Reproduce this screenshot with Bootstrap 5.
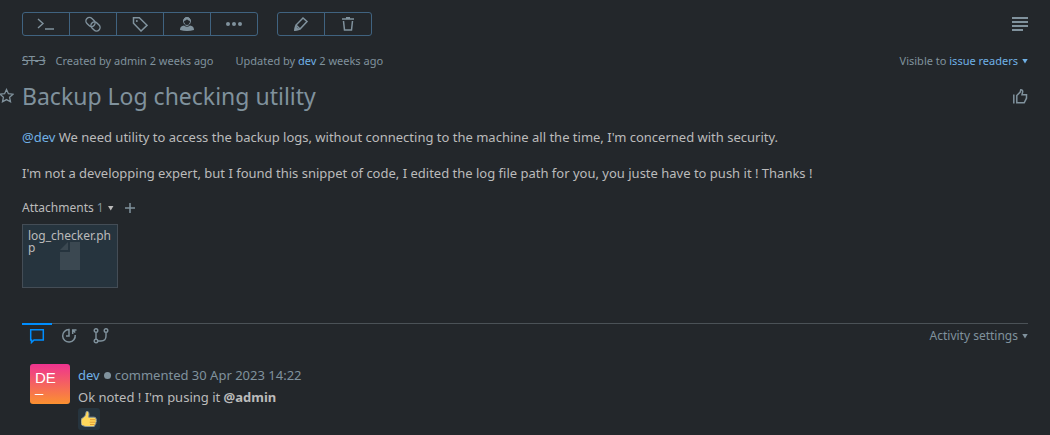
<!DOCTYPE html>
<html lang="en">
<head>
<meta charset="utf-8">
<meta name="viewport" content="width=device-width, initial-scale=1">
<title>ST-3 Backup Log checking utility</title>
<link href="https://cdn.jsdelivr.net/npm/bootstrap@5.3.0/dist/css/bootstrap.min.css" rel="stylesheet">
<style>
  :root { --page: #23272b; --text: #bbbbbb; --muted: #80929d; --link: #70b1e6; --line: #406380; --accent: #008eff; --gutter: 22px; }
  body { background: var(--page); color: var(--text); font-family: "Noto Sans", sans-serif; font-size: 13px; line-height: 20px; }
  svg { display: block; fill: none; stroke: currentColor; }
  a { color: var(--link); text-decoration: none; }
  .issue { padding: 12px var(--gutter) 0; }
  .tool-btn { width: 48px; height: 24px; padding: 0; border: 1px solid var(--line); border-radius: 3px; color: var(--muted); display: flex; align-items: center; justify-content: center; flex: none; }
  .tool-btn:hover { color: var(--link); border-color: var(--link); }
  .edit-group { margin-left: 19px; }
  .plain-btn { padding: 0; border: 0; background: none; color: var(--muted); display: flex; align-items: center; }
  .soft { color: var(--muted); }
  .meta-row { font-size: 11px; color: var(--muted); margin-top: 15px; }
  .issue-id { font-size: 12px; margin-right: 10px; }
  .created { margin-right: 22px; }
  .visible-to { color: var(--link); }
  .caret { width: 6px; height: 5px; background: currentColor; clip-path: polygon(0 0, 100% 0, 50% 100%); flex: none; }
  .title-row { margin: 10px 0 0 calc(-1 * var(--gutter)); }
  .star-btn { width: var(--gutter); }
  .issue-title { font-size: 23px; line-height: 30px; font-weight: 400; color: var(--muted); }
  .description { margin-top: 16px; }
  .description p { margin-bottom: 16px; }
  .attach-head { font-size: 12px; margin-top: 15px; }
  .add-btn { margin-left: 10px; }
  .attachment { width: 96px; height: 64px; margin-top: 6px; padding: 5px; border: 1px solid #444d56; background: #26343e; color: var(--text); font-size: 12px; line-height: 12px; overflow-wrap: anywhere; display: grid; }
  .attachment > * { grid-area: 1 / 1; }
  .activity-bar { margin-top: 35px; border-top: 1px solid #4b5257; font-size: 12px; color: var(--muted); }
  .tab-btn { width: 30px; height: 24px; border-top: 2px solid transparent; margin: -1px 2px 0 0; justify-content: center; }
  .tab-btn.active { border-top-color: var(--accent); color: var(--accent); }
  .settings-btn { margin-top: 2px; }
  .comment { margin: 17px 0 0 8px; line-height: 22px; }
  .avatar { width: 40px; height: 40px; border-radius: 3px; background: linear-gradient(#ee3390, #fb9130); color: #fff; font-family: "Liberation Sans", sans-serif; font-size: 15px; line-height: 18px; padding: 5px; }
  .avatar-dash { line-height: 12px; }
  .presence { width: 7px; height: 7px; border-radius: 50%; background: #80929d; }
  .reaction { width: 22px; height: 22px; border-radius: 3px; background: #26343e; justify-content: center; }
</style>
</head>
<body>
<main class="issue">
  <div class="d-flex align-items-center">
    <div class="btn-group" role="group" aria-label="Issue actions">
      <button class="btn tool-btn" aria-label="Apply command"><svg width="18" height="14"><path d="M1 2l5 4.500-5 4.500M8 12h9" stroke-width="1.400"/></svg></button>
      <button class="btn tool-btn" aria-label="Link issue"><svg width="16" height="16" stroke-width="1.400"><rect x="0.500" y="2.500" width="10" height="7" rx="3.500" transform="rotate(45 5.500 6)"/><rect x="5.500" y="7" width="10" height="7" rx="3.500" transform="rotate(45 10.500 10.500)"/></svg></button>
      <button class="btn tool-btn" aria-label="Tags"><svg width="16" height="16"><path d="M1.500 1.700h5.800l7.700 7.600L9 15 1.500 7.300z" stroke-width="1.500"/><circle cx="4.800" cy="5" r="1" fill="currentColor" stroke="none"/></svg></button>
      <button class="btn tool-btn" aria-label="Assignee"><svg width="16" height="16"><path d="M4.500 5C4.500 3 6 1.500 8 1.500S11.500 3 11.500 5 10 9.500 8 9.500 4.500 7 4.500 5z"/><path d="M4.500 5c0-2.500 1.500-4 3.500-4s3.500 1.500 3.500 4C9 5 9 3.500 8 3.500S7 5 4.500 5zM1 14c0-3 1.500-4 4-4.500Q8 12 11 9.500c2.500.5 4 1.500 4 4.500Q8 16 1 14z" fill="currentColor" stroke="none"/></svg></button>
      <button class="btn tool-btn" aria-label="More"><svg width="18" height="16"><g fill="currentColor" stroke="none"><circle cx="3" cy="8" r="2"/><circle cx="9" cy="8" r="2"/><circle cx="15" cy="8" r="2"/></g></svg></button>
    </div>
    <div class="btn-group edit-group" role="group" aria-label="Edit actions">
      <button class="btn tool-btn" aria-label="Edit"><svg width="16" height="16" stroke-width="1.500"><path d="M2 14l1-5 7-7 4 3.500-7 7.500zM3 9l4 4"/><path d="M2 14l.5-3 2.500 2.500z" fill="currentColor"/></svg></button>
      <button class="btn tool-btn" aria-label="Delete"><svg width="14" height="16"><path d="M1 3h12M5 1.800h4" stroke-width="1.500"/><path d="M2.500 5l1 9h7l1-9" stroke-width="1.500"/></svg></button>
    </div>
    <button class="plain-btn ms-auto" aria-label="Show sidebar"><svg width="16" height="14"><path d="M0 1h16M0 5h16M0 9h16M0 13h11" stroke-width="2"/></svg></button>
  </div>

  <div class="meta-row d-flex align-items-center">
    <a href="#" class="issue-id text-reset text-decoration-line-through">ST-3</a>
    <span class="created">Created by admin 2 weeks ago</span>
    <span>Updated by <a href="#">dev</a> 2 weeks ago</span>
    <button class="plain-btn ms-auto">Visible to&nbsp;<span class="visible-to d-flex align-items-center">issue readers<span class="caret ms-1"></span></span></button>
  </div>

  <div class="title-row d-flex align-items-center">
    <button class="plain-btn star-btn" aria-label="Star issue"><svg width="14" height="16"><path d="M6.500 1.500l1.900 4.200 4.600.5-3.400 3.100.9 4.500-4-2.200-4 2.200.9-4.500L0 6.200l4.600-.5z" stroke-width="1.300"/></svg></button>
    <h1 class="issue-title mb-0">Backup Log checking utility</h1>
    <button class="plain-btn ms-auto" aria-label="Vote"><svg width="16" height="16" stroke-width="1.500"><path d="M1.800 6.500v9M4.800 14.800V7.500L8.200 4 8.800 1.700c1.700 0 2.200 1.200 1.700 2.800L10 6.700h4.500v3.500l-2.300 4.600z"/></svg></button>
  </div>

  <div class="description">
    <p><a href="#">@dev</a> We need utility to access the backup logs, without connecting to the machine all the time, I'm concerned with security.</p>
    <p class="mb-0">I'm not a developping expert, but I found this snippet of code, I edited the log file path for you, you juste have to push it ! Thanks !</p>
  </div>

  <div class="attach-head d-flex align-items-center">
    <button class="plain-btn text-reset">Attachments&nbsp;<span class="soft">1</span><span class="caret ms-1"></span></button>
    <button class="plain-btn add-btn" aria-label="Add attachment"><svg width="12" height="12"><path d="M6 1v10M1 6h10" stroke-width="1.500"/></svg></button>
  </div>
  <a href="#" class="attachment">
    <svg class="mx-auto mt-auto mb-2 pb-1" width="20" height="32" viewBox="0 0 20 28"><path d="M10 0h10v28H0V10h10zM0 8l8-8v8z" fill="#3b4851" stroke="none"/></svg>
    <span>log_checker.php</span>
  </a>

  <div class="activity-bar d-flex align-items-start">
    <button class="plain-btn tab-btn active" aria-label="Comments"><svg width="16" height="16"><path d="M1.700 1.700h12.600v10.300H5L2.500 14.500V12h-.8z" stroke-width="1.500"/></svg></button>
    <button class="plain-btn tab-btn" aria-label="History"><svg width="16" height="16" stroke-width="1.500"><path d="M5 8h3V1.500A6.300 6.300 0 1 0 14.200 7M15.500 2h-3.800v4M11.700 2l2.500 2.500"/></svg></button>
    <button class="plain-btn tab-btn" aria-label="VCS changes"><svg width="16" height="16" stroke-width="1.400"><circle cx="3" cy="2.500" r="1.800"/><circle cx="3" cy="13" r="1.800"/><circle cx="13" cy="2.500" r="1.800"/><path d="M3 4.500v6.500M13 4.500v3.500q0 5-5 5H5"/></svg></button>
    <button class="plain-btn settings-btn ms-auto">Activity settings<span class="caret ms-1"></span></button>
  </div>

  <article class="comment d-flex gap-2">
    <div class="avatar flex-shrink-0"><div>DE</div><div class="avatar-dash">–</div></div>
    <div>
      <div class="d-flex align-items-center gap-1 soft"><a href="#">dev</a><span class="presence"></span><span>commented 30 Apr 2023 14:22</span></div>
      <div>Ok noted ! I'm pusing it <strong>@admin</strong></div>
      <button class="plain-btn reaction" aria-label="Thumbs up"><svg width="16" height="16" stroke="none"><path d="M0 9q0-1.500 1.500-2Q4.500 5.500 4.700 3 4.800 0 6.200 0 8 .5 8 3L7.700 6.200H13q2 0 2 1.500.7 1 .2 2 .5 1.200-.4 2 .3 1.300-.8 2 0 2-2 2H6Q3.500 15.500 1.500 14.500 0 14 0 12z" fill="#ffd95c"/><path d="M9 8.700h5.500M8.700 11.200h5.500M9 13.500h4.500" stroke="#dc9534" stroke-width=".9"/></svg></button>
    </div>
  </article>
</main>
<script src="https://cdn.jsdelivr.net/npm/bootstrap@5.3.0/dist/js/bootstrap.bundle.min.js"></script>
</body>
</html>
